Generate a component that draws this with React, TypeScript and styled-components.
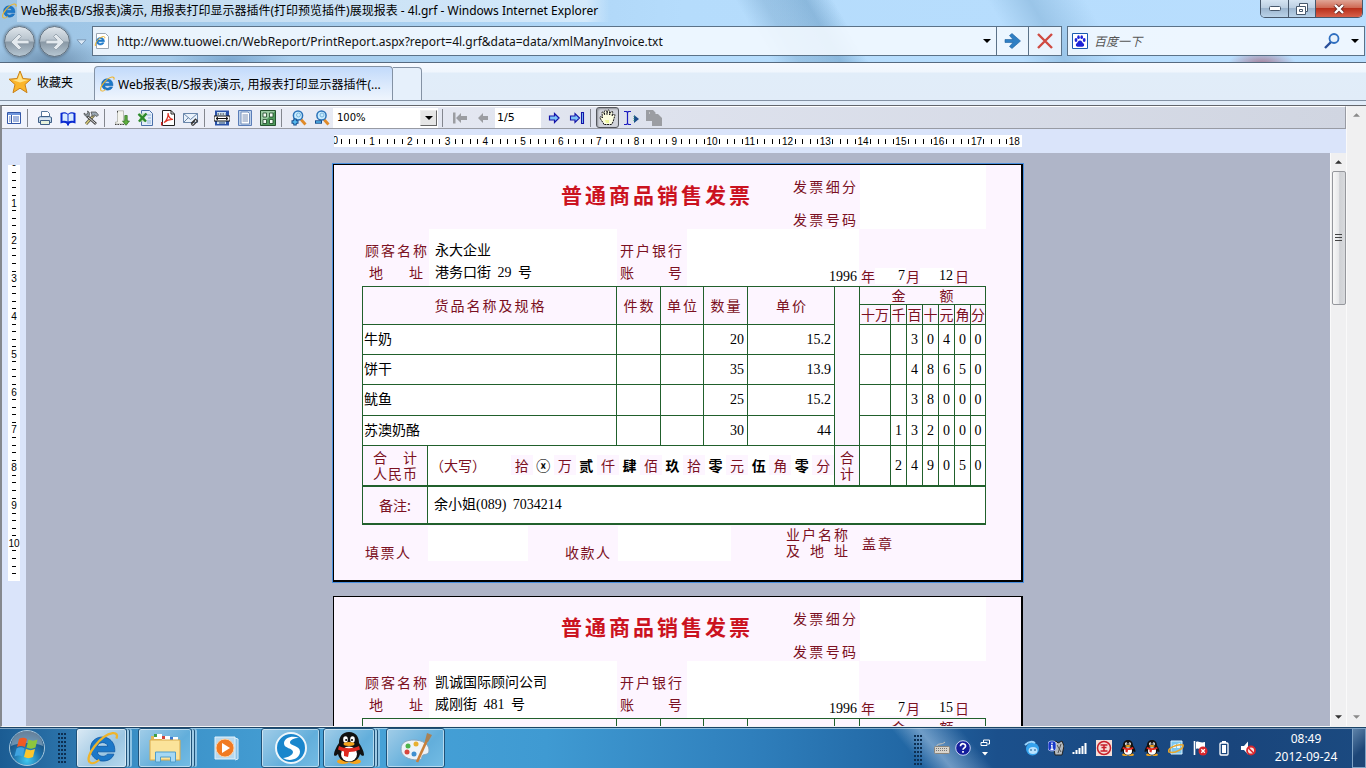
import React from 'react';
import styled, { createGlobalStyle, css } from 'styled-components';

const UI = `"Noto Sans", "Noto Sans CJK SC", sans-serif`;
const FORM = `"Liberation Serif", "Noto Sans CJK SC", serif`;
const KAI = `"Noto Sans CJK SC", sans-serif`;
const MAROON = '#7b1022';
const GREEN = '#21602c';
const PINK = '#fdf5ff';

const GlobalStyle = createGlobalStyle`
  * { box-sizing: border-box; }
  body { margin: 0; font-family: ${UI}; font-size: 12px; color: #000; }
  button { font: inherit; padding: 0; border: 0; background: none; color: inherit; }
  svg { display: block; flex: none; }
`;

/* ---------- window frame ---------- */

const Window = styled.div`
  height: 100vh;
  display: flex;
  flex-direction: column;
  overflow: hidden;
  background: #e2edf9;
`;

const Glass = styled.header`
  flex: none;
  border-bottom: 1px solid #566a80;
  background:
    radial-gradient(60px 24px at 50px 62px, rgba(70, 100, 130, 0.55), transparent),
    radial-gradient(60px 20px at 230px 60px, rgba(70, 120, 170, 0.4), transparent),
    radial-gradient(34px 14px at 1262px 64px, rgba(150, 60, 80, 0.6), transparent),
    linear-gradient(60deg, transparent 55%, rgba(90, 140, 180, 0.3) 57%, transparent 62%),
    linear-gradient(240deg, transparent 20%, rgba(110, 160, 200, 0.4) 24%, transparent 27%, transparent 38%, rgba(110, 160, 200, 0.5) 40%, transparent 43%),
    linear-gradient(90deg, #9dc4e4 0, #a9d0f0 30%, #b5dcfc 50%, #b9defe 100%);
`;

const TitleBar = styled.div`
  display: flex;
  align-items: flex-start;
  height: 26px;
  padding: 0 3px 0 1px;
`;

const TitleText = styled.h1`
  margin: 0;
  padding: 0 12px 0 4px;
  font-size: 12px;
  line-height: 22px;
  font-weight: 400;
  white-space: nowrap;
  background: linear-gradient(90deg, rgba(255, 255, 255, 0.35), rgba(255, 255, 255, 0.45) 96%, transparent);
`;

const TitleIcon = styled.span`
  padding-top: 3px;
`;

const WindowButtons = styled.div`
  display: flex;
  margin-left: auto;
  height: 18px;
  border: 1px solid #47586c;
  border-top: 0;
  border-radius: 0 0 5px 5px;
  overflow: hidden;
`;

const WindowButton = styled.button<{ $close?: boolean }>`
  width: ${p => (p.$close ? 47 : 27)}px;
  display: flex;
  align-items: center;
  justify-content: center;
  border-left: ${p => (p.$close ? 1 : 0)}px solid #47586c;
  background: ${p =>
    p.$close
      ? 'linear-gradient(#e0a596, #cf6a55 45%, #b9301b 50%, #d8614a)'
      : 'linear-gradient(#d5e4f2, #bccfe2 45%, #9db6cf 50%, #b9d2e8)'};
  & + & { border-left: 1px solid #47586c; }
`;

const NavRow = styled.div`
  display: flex;
  height: 36px;
  padding-left: 4px;
`;

const RoundButton = styled.button`
  width: 31px;
  height: 31px;
  margin-right: 4px;
  border-radius: 50%;
  border: 1px solid #64727f;
  display: flex;
  align-items: center;
  justify-content: center;
  background: linear-gradient(#dfe6ec, #b4c0ca 48%, #8998a5 52%, #b6c6d2);
  box-shadow: 0 0 3px #4c5c6c;
`;

const HistoryButton = styled.button`
  width: 14px;
  height: 32px;
  display: flex;
  align-items: center;
  justify-content: center;
`;

const Field = styled.div`
  display: flex;
  align-items: center;
  height: 30px;
  border: 1px solid #5b7288;
  background: rgba(244, 249, 255, 0.88);
`;

const AddressField = styled(Field)`
  flex: 1;
  margin-left: 4px;
`;

const SearchField = styled(Field)`
  width: 298px;
  margin: 0 1px 0 5px;
  padding: 0 0 0 4px;
`;

const FieldInput = styled.input`
  flex: 1;
  min-width: 0;
  border: 0;
  outline: 0;
  background: transparent;
  padding: 0 0 0 6px;
  font-family: ${UI};
  font-size: 12px;
  color: #111;
  &::placeholder { color: #555; opacity: 1; font-style: italic; }
`;

const FieldButton = styled.button<{ $w: number; $line?: boolean }>`
  width: ${p => p.$w}px;
  height: 28px;
  display: flex;
  align-items: center;
  justify-content: center;
  border-left: ${p => (p.$line ? 1 : 0)}px solid #5b7288;
`;

const TabRow = styled.div`
  flex: none;
  display: flex;
  align-items: flex-end;
  height: 38px;
  border-bottom: 1px solid #8492a4;
  background: linear-gradient(#f5f9ff, #f0f6fd 9px, #e1edf9 10px, #e1ecf8);
`;

const Favorites = styled.button`
  display: flex;
  align-items: center;
  align-self: stretch;
  gap: 5px;
  width: 94px;
  padding-left: 8px;
`;

const Tab = styled.div`
  display: flex;
  align-items: center;
  gap: 3px;
  width: 299px;
  height: 34px;
  padding: 0 4px;
  border: 1px solid #8492a4;
  border-bottom: 0;
  border-radius: 4px 4px 0 0;
  background: linear-gradient(#c2dafb, #d9e8fc 50%, #eff5fd);
  white-space: nowrap;
`;

const TabTitle = styled.span`
  overflow: hidden;
`;

const NewTab = styled.button`
  width: 29px;
  height: 33px;
  border: 1px solid #8492a4;
  border-left: 0;
  border-bottom: 0;
  border-radius: 0 4px 0 0;
  background: #e6f0fb;
`;

/* ---------- report viewer ---------- */

const Client = styled.main`
  flex: 1;
  min-height: 0;
  display: flex;
  margin-top: 4px;
  border-top: 1px solid #63666c;
  border-left: 2px solid #85888e;
  border-bottom: 1px solid #f4f4f4;
`;

const Viewer = styled.section`
  flex: 1;
  min-width: 0;
  display: flex;
  flex-direction: column;
  background: #dae4fa;
`;

const Toolbar = styled.div`
  flex: none;
  display: flex;
  align-items: center;
  height: 23px;
  border-top: 1px solid #fff;
  border-bottom: 1px solid #989ba4;
  border-right: 1px solid #989ba4;
  background: linear-gradient(90deg, #f2f4fc, #dfe3ee 45%, #d0d5e1);
`;

const ToolButton = styled.button<{ $pressed?: boolean }>`
  width: 23px;
  height: 21px;
  display: flex;
  align-items: center;
  justify-content: center;
  ${p => p.$pressed && css`
    border: 1px solid #55585e;
    border-radius: 3px;
    background: #d2d5dc;
    box-shadow: inset 1px 1px 2px #8c8f96;
  `}
`;

const Separator = styled.i`
  width: 1px;
  height: 18px;
  margin: 0 5px 0 2px;
  background: #84878f;
`;

const ZoomBox = styled.div`
  display: grid;
  grid-template-columns: 1fr 19px;
  width: 105px;
  height: 20px;
  margin-right: 2px;
  background: #fff;
`;

const ZoomSelect = styled.select`
  grid-area: 1 / 1 / 2 / 3;
  appearance: none;
  border: 0;
  outline: 0;
  background: #fff;
  padding: 0 20px 0 4px;
  font-family: "DejaVu Sans", sans-serif;
  font-size: 10px;
  color: #000;
`;

const ZoomArrow = styled.span`
  grid-area: 1 / 2 / 2 / 3;
  z-index: 1;
  pointer-events: none;
  display: flex;
  align-items: center;
  justify-content: center;
  margin: 2px 1px;
  border: 1px solid;
  border-color: #eee #666 #666 #eee;
  background: #e6e6e6;
`;

const PageInput = styled.input`
  width: 46px;
  height: 20px;
  margin: 0 1px;
  border: 0;
  outline: 0;
  padding: 0 2px;
  font-family: "DejaVu Sans", sans-serif;
  font-size: 11px;
`;

const RulerBand = styled.div`
  flex: none;
  height: 24px;
  display: flex;
  align-items: center;
  justify-content: center;
  padding: 0 16px 0 24px;
`;

const HRuler = styled.div`
  display: flex;
  width: 688px;
  height: 12px;
  overflow: hidden;
  background: #fff;
  font: 10px/12px "Liberation Sans", sans-serif;
`;

const VRuler = styled(HRuler)`
  flex-direction: column;
  width: 12px;
  height: 416px;
  margin: 12px 0 0 6px;
`;

const RulerStart = styled.span`
  flex: none;
  width: 4px;
  height: 12px;
  display: flex;
  justify-content: flex-end;
  overflow: hidden;
`;

const RulerTop = styled(RulerStart)`
  width: 12px;
  height: 4px;
  justify-content: center;
  align-items: flex-end;
`;

const Ticks = styled.div<{ $vertical?: boolean }>`
  flex: none;
  display: grid;
  ${p => p.$vertical
    ? css`height: 416px; grid-auto-rows: 1fr;`
    : css`width: 680px; grid-auto-flow: column; grid-auto-columns: 1fr;`}
`;

const Slot = styled.span`
  display: flex;
  align-items: center;
  justify-content: center;
  min-width: 0;
  min-height: 0;
  white-space: nowrap;
  line-height: 1px;
`;

const Tick = styled.i<{ $vertical?: boolean }>`
  width: ${p => (p.$vertical ? 4 : 1)}px;
  height: ${p => (p.$vertical ? 1 : 5)}px;
  background: #000;
`;

const Body = styled.div`
  flex: 1;
  min-height: 0;
  display: flex;
`;

const RulerColumn = styled.div`
  flex: none;
  width: 24px;
`;

const Canvas = styled.div`
  flex: 1;
  min-width: 0;
  overflow: hidden;
  display: flex;
  flex-direction: column;
  align-items: center;
  gap: 14px;
  padding-top: 11px;
  background: #afb5c8;
`;

const Scrollbar = styled.div<{ $w: number }>`
  flex: none;
  width: ${p => p.$w}px;
  display: flex;
  flex-direction: column;
  align-items: center;
  background: #f0f0f1;
  border-left: 1px solid #fafafa;
`;

const ScrollButton = styled.button<{ $end?: boolean }>`
  width: 100%;
  height: 18px;
  display: flex;
  align-items: center;
  justify-content: center;
  margin-top: ${p => (p.$end ? 'auto' : 0)};
`;

const Thumb = styled.div`
  width: 14px;
  height: 134px;
  border: 1px solid #95979c;
  border-radius: 2px;
  background: linear-gradient(90deg, #f8f8f8, #e6e7e9 50%, #cfd1d5 55%, #d8dadd);
  display: flex;
  align-items: center;
  justify-content: center;
`;

/* ---------- invoice form ---------- */

const Sheet = styled.article<{ $active?: boolean }>`
  flex: none;
  width: 690px;
  height: 418px;
  padding: 0 35px 0 28px;
  border: solid #000;
  border-width: 1px 2px 2px 1px;
  background: ${PINK};
  outline: ${p => (p.$active ? '1px solid #4a90e0' : 'none')};
  font-family: ${FORM};
  font-size: 14px;
`;

const HeadTop = styled.div`
  display: flex;
  height: 64px;
`;

const Title = styled.h2`
  width: 189px;
  margin: 14px 0 0 199px;
  font-family: ${KAI};
  font-size: 21px;
  line-height: 30px;
  font-weight: 700;
  color: #cb1220;
  text-align-last: justify;
`;

const Label = styled.span<{ $w: number; $ml?: number }>`
  display: block;
  flex: none;
  width: ${p => p.$w}px;
  margin-left: ${p => p.$ml ?? 0}px;
  font-family: ${KAI};
  font-size: 14px;
  line-height: 16px;
  color: ${MAROON};
  text-align-last: justify;
  white-space: nowrap;
`;

const NumberLabels = styled.div`
  display: flex;
  flex-direction: column;
  gap: 17px;
  padding-top: 13px;
  margin-left: 43px;
`;

const Blank = styled.div<{ $w: number; $ml: number; $h?: number }>`
  flex: none;
  width: ${p => p.$w}px;
  margin-left: ${p => p.$ml}px;
  ${p => p.$h && `height: ${p.$h}px;`}
  background: #fff;
`;

const HeadInfo = styled.div`
  display: flex;
  height: 57px;
`;

const LabelPair = styled.div<{ $ml: number }>`
  display: flex;
  flex-direction: column;
  align-items: center;
  gap: 6px;
  width: 62px;
  padding-top: 13px;
  margin-left: ${p => p.$ml}px;
`;

const Values = styled(Blank)`
  padding: 11px 0 0 6px;
  line-height: 22px;
  white-space: nowrap;
`;

const Num = styled.span`
  margin: 0 3px;
`;

const YearBlank = styled(Blank)`
  display: flex;
  align-items: flex-end;
  justify-content: flex-end;
  padding: 0 2px 1px 0;
  line-height: 17px;
`;

const DateParts = styled.div`
  display: flex;
  align-items: flex-end;
  padding: 0 0 2px 2px;
  line-height: 16px;
`;

const DateBlank = styled.span<{ $w: number }>`
  width: ${p => p.$w}px;
  padding-right: 1px;
  text-align: right;
  background: #fff;
`;

const Grid = styled.table`
  width: 624px;
  table-layout: fixed;
  border-collapse: separate;
  border-spacing: 0;
  border: solid ${GREEN};
  border-width: 1px 0 0 1px;
  line-height: 16px;
`;

const Row = styled.tr<{ $h: number }>`
  height: ${p => p.$h}px;
`;

const cell = css`
  padding: 0;
  border: solid ${GREEN};
  border-width: 0 1px 1px 0;
  white-space: nowrap;
`;

const HeadCell = styled.th<{ $thick?: boolean }>`
  ${cell}
  font-family: ${KAI};
  font-size: 14px;
  font-weight: 400;
  color: ${MAROON};
  text-align: center;
  padding-bottom: 1px;
  ${p => p.$thick && 'border-bottom-width: 2px;'}
`;

const Cell = styled.td<{ $align?: string; $thick?: boolean; $pad?: string }>`
  ${cell}
  background: #fff;
  text-align: ${p => p.$align ?? 'left'};
  padding: ${p => p.$pad ?? '0'};
  ${p => p.$thick && 'border-bottom-width: 2px;'}
`;

const Centered = styled.div`
  display: flex;
  justify-content: center;
`;

const Stack = styled.div`
  display: flex;
  flex-direction: column;
  align-items: center;
`;

const Words = styled.div`
  display: flex;
  align-items: center;
  padding-bottom: 2px;
`;

const WordSlots = styled.div`
  flex: 1;
  display: grid;
  grid-template-columns: repeat(15, 1fr);
  margin-left: 25px;
`;

const Unit = styled.span`
  font-family: ${KAI};
  color: ${MAROON};
  text-align: center;
  line-height: 20px;
  background: ${PINK};
`;

const Digit = styled.b`
  font-family: ${KAI};
  font-weight: 700;
  text-align: center;
  line-height: 20px;
`;

const Footer = styled.div`
  display: flex;
  align-items: flex-start;
  padding-top: 1px;
`;

const Raise = styled.div<{ $top: number }>`
  padding-top: ${p => p.$top}px;
`;

/* ---------- taskbar ---------- */

const Taskbar = styled.footer`
  flex: none;
  display: flex;
  height: 41px;
  padding-left: 8px;
  border-top: 1px solid #1c4468;
  box-shadow: inset 0 1px 0 rgba(255, 255, 255, 0.45);
  color: #fff;
  background:
    linear-gradient(50deg, transparent 66%, rgba(190, 215, 240, 0.5) 68%, transparent 71%),
    linear-gradient(90deg, #1b5c93 0, #2c74ab 5%, #3a8fc6 10%, #48a3d8 25%, #3f9ad2 40%, #2f7fbc 55%, #2268a5 66%, #1b508c 73%, #19457c 90%, #1b4a80);
`;

const Orb = styled.button`
  width: 38px;
  display: flex;
  align-items: center;
  justify-content: center;
`;

const Grip = styled.i`
  width: 9px;
  height: 31px;
  margin: 5px 9px 0 12px;
  background-image: radial-gradient(circle at 1px 1px, #0d2f52 1px, transparent 1px);
  background-size: 3px 4px;
`;

const TaskButton = styled.button<{ $w: number; $kind?: 'active' | 'plain'; $stack?: boolean }>`
  width: ${p => p.$w}px;
  height: 40px;
  margin-right: ${p => (p.$stack ? 11 : 3)}px;
  display: flex;
  align-items: center;
  justify-content: center;
  ${p => p.$kind !== 'plain' && css`
    border: 1px solid #1f5279;
    border-radius: 3px;
    background: ${p.$kind === 'active'
      ? 'linear-gradient(135deg, #dbeaf5, #9cc6e2 60%, #b6d9ee)'
      : 'linear-gradient(135deg, #a2cde8, #62aedb 60%, #74bce4)'};
    box-shadow: inset 0 0 0 1px rgba(255, 255, 255, 0.5)
      ${p.$stack ? ', 3px 0 0 -1px #9fcbe6, 4px 0 0 -1px #1f5279, 6px 0 0 -1px #8cc2e4' : ''};
  `}
`;

const Tray = styled.div`
  display: flex;
  align-items: center;
  margin-left: auto;
`;

const TrayButton = styled.button<{ $w?: number }>`
  width: ${p => p.$w ?? 24}px;
  height: 40px;
  display: flex;
  align-items: center;
  justify-content: center;
`;

const Clock = styled.time`
  width: 92px;
  font-size: 12px;
  line-height: 18px;
  text-align: center;
`;

const ShowDesktop = styled.button`
  width: 14px;
  height: 40px;
  border: 1px solid #7fa3c6;
  background: linear-gradient(135deg, #5d82a8, #1d4677 60%);
`;

/* ---------- drawings ---------- */

const Svg = ({ s = 16, w, h, vb, children }: { s?: number; w?: number; h?: number; vb?: string; children: React.ReactNode }) => (
  <svg width={w ?? s} height={h ?? s} viewBox={vb ?? `0 0 ${w ?? s} ${h ?? s}`} fill="none" aria-hidden="true">{children}</svg>
);

const IeIcon = ({ s = 16 }: { s?: number }) => (
  <Svg s={s} vb="0 0 16 16">
    <path d="M14 9.800H5.800c.2 2.400 3.800 2.800 4.700 1.100h3.100c-1.600 4.900-11 4.400-11-2.600 0-7.500 12-7.500 11.400 1.500zM5.800 7.200h4.900c-.2-2.300-4.500-2.300-4.900 0z" fill="#1c78c8" stroke="#0e5aa6" strokeWidth=".4" />
    <path d="M2.300 14.800C-.6 12 7.600 1.800 13 1c2-.2 2.400 1 1.800 2.600" stroke="#efb42a" strokeWidth="1.100" />
    <path d="M2.300 14.800c1 .7 2.900 0 4.400-1.300" stroke="#efb42a" strokeWidth="1" />
  </Svg>
);

const Down = ({ c = '#000', w = 8 }: { c?: string; w?: number }) => (
  <Svg w={w} h={4} vb="0 0 8 4"><path d="M0 0h8L4 4z" fill={c} /></Svg>
);
const Up = ({ c = '#333' }: { c?: string }) => (
  <Svg w={7} h={4} vb="0 0 8 4"><path d="M0 4h8L4 0z" fill={c} /></Svg>
);

const NavArrow = ({ flip }: { flip?: boolean }) => (
  <Svg s={22}>
    <path transform={flip ? 'translate(22 0) scale(-1 1)' : undefined}
      d="M2 11l8-8 2.500 2.500L8.800 9.200H20v3.600H8.800l3.700 3.700L10 19z" fill="#e3e9ee" stroke="#8e9ba6" strokeWidth=".8" />
  </Svg>
);

const PageIe = () => (
  <Svg s={16}>
    <path d="M2.500 .5h9l3 3v12h-12z" fill="#fff" stroke="#9aa6b2" />
    <path d="M10.500 8.800H4.200c.3 2 3 2.300 3.800 1H10c-1.200 3.300-7.600 3-7.600-1.500 0-5 8.300-5.500 8.100.5zM4.300 7h3.900c-.3-1.800-3.400-1.800-3.900 0z" fill="#1c78c8" stroke="#1c78c8" strokeWidth=".5" />
    <path d="M1.500 13C0 11 5 4 9.500 3.500c1.300 0 1.500.8 1.200 1.800" stroke="#efb42a" />
  </Svg>
);

const Star = () => (
  <Svg s={24}>
    <path d="M12 1l3 7.500 8 .7-6 5.300 2 8.200-7-4.500-7 4.500 2-8.200-6-5.300 8-.7z" fill="#fbb62b" stroke="#c9821a" strokeLinejoin="round" />
    <path d="M12 3l2.300 6.300 5.700.6-8 2.600-7.500-2.600 5.200-.6z" fill="#ffe288" />
  </Svg>
);

const Paw = () => (
  <Svg s={16}>
    <path d="M.5.5h15v15H.5z" fill="#fff" stroke="#1a5ab0" />
    <g fill="#1d22d8">
      <ellipse cx="4" cy="7" rx="1.400" ry="1.900" /><ellipse cx="6.500" cy="4.200" rx="1.300" ry="1.900" />
      <ellipse cx="9.700" cy="4.200" rx="1.300" ry="1.900" /><ellipse cx="12.200" cy="7" rx="1.400" ry="1.900" />
      <path d="M8 7.500c2 0 2 1.800 3.300 2.800 1.500 1.200.9 3.400-.9 3.400H5.600c-1.800 0-2.400-2.200-.9-3.400C6 9.300 6 7.500 8 7.500z" />
    </g>
  </Svg>
);

const tools = {
  panel: <Svg><path d="M1.500 2.500h13v11h-13z" fill="#fff" stroke="#3558a8" /><path d="M2 3h12v2H2z" fill="#6f95dc" /><path d="M5.500 5v8" stroke="#3558a8" /><path d="M3 7h1.500M3 9h1.500M3 11h1.500M7 7h6M7 9h6M7 11h6" stroke="#4a6fc0" /></Svg>,
  print: <Svg><path d="M4.500 7V1.500h6l2 2V7" fill="#fff" stroke="#57789c" /><path d="M1.500 7.500l2-1h9l2 1v5h-13z" fill="#b9cfe4" stroke="#3f5f86" /><path d="M3.500 10.500h9v4h-9z" fill="#e8f2dc" stroke="#3f5f86" /><path d="M2.500 9h11" stroke="#fff" /></Svg>,
  book: <Svg><path d="M.5 3c3-1.500 6-1 7.500 1 1.500-2 4.500-2.500 7.500-1v10.500c-2.500-1-5-.8-6.500.5v1.500H7V14c-1.500-1.300-4-1.500-6.500-.5z" fill="#0a2ad0" /><path d="M2.500 4c2-.8 3.700-.5 5 .6v7c-1.300-.8-3-1-5-.5zM13.500 4c-2-.8-3.700-.5-5 .6v7c1.300-.8 3-1 5-.5z" fill="#d7eaff" /></Svg>,
  tools: <Svg><path d="M3 14l8-9" stroke="#5b5b4a" strokeWidth="3" /><path d="M3 14l8-9" stroke="#e0cf7a" strokeWidth="1.300" /><path d="M4 6l9 8" stroke="#444" strokeWidth="2.800" /><path d="M4.500 6.500l8 7" stroke="#e6e6e6" /><path d="M1 3l2 1.500L5 3l-.5-2C7 2 7 5 5.500 6.500 3 7 1 5.500 1 3z" fill="#8a949c" stroke="#444" strokeWidth=".7" /><path d="M8 2l5 0 2.500 3-1.500 1.500L11.500 5 9.500 6.500z" fill="#9aa8b4" stroke="#444" strokeWidth=".7" /></Svg>,
  exportDoc: <Svg><path d="M3.500 .8h6V10h4v4h-12V12h2z" fill="#f4f4ee" stroke="#aeb0a8" strokeWidth=".8" /><path d="M1 14.500h9M3.500 1v2" stroke="#444" strokeDasharray="1.500 1" /><path d="M10.800 5.500h2.400V11h2.300L12 15.300 8.500 11h2.300z" fill="#5fae3e" stroke="#2d6e1e" strokeWidth=".7" /></Svg>,
  excel: <Svg><path d="M4.500 .5h8l3 3v12h-11z" fill="#e4eefb" stroke="#4a6fa8" /><path d="M10 5h4M11 8h3M10 11h4M10 13h4" stroke="#8fb4dc" /><path d="M1 3.500h8.500l-2 4 2 4H1l2-4z" fill="#b8dcb0" /><path d="M1.500 4L9 11.500M9.500 3.500l-7.500 8" stroke="#2c8a2c" strokeWidth="2.400" /></Svg>,
  pdf: <Svg><path d="M2.500 .5h8.500l3.500 3.500v11.500h-12z" fill="#fff" stroke="#222" /><path d="M11 .5V4h3.500" stroke="#222" /><path d="M4 12.500c2.500-1.500 4.500-6 4-9.500.3 4 2 6 5 6.500-3-.2-6 .6-9 3z" stroke="#e03020" strokeWidth="1.200" /><path d="M1 12h1.500v3.500H1z" fill="#c22" /></Svg>,
  mail: <Svg><path d="M.5 3.500h14v9H.5z" fill="#eaf2fb" stroke="#6b87ab" /><path d="M.5 3.500L7.500 9.500l7-6M.5 12.500l5-5" stroke="#6b87ab" /><path d="M8 13.500l4.500-4.500 2 2-4 4c-1 .8-2.500-.5-1.500-1.500L12 10.500" stroke="#333" strokeWidth="1.100" /></Svg>,
  width: <Svg><path d="M1 .5h14v15H1z" fill="#2a52a8" /><path d="M3 2h9v12H3z" fill="#cfe4f5" /><path d="M3.500 4h8" stroke="#333" strokeDasharray="1.500 1" /><path d="M0 6h16v5H0z" fill="#fff" stroke="#111" /><path d="M2 8.500h12M4 7L2 8.500 4 10M12 7l2 1.500L12 10" stroke="#111" /><path d="M5 13h6" stroke="#26406e" /></Svg>,
  page: <Svg><path d="M1.500 .5h13v15h-13z" fill="#bcd0ea" stroke="#5a7db8" /><path d="M4 2h7l1.500 1.500V14H4z" fill="#fff" stroke="#7590bd" /><path d="M5.500 5h5.500M5.500 7h5.500M5.500 9h5.500M5.500 11h5.500" stroke="#7b8fb4" /></Svg>,
  multi: <Svg><path d="M.5.5h15v15H.5z" fill="#4f9a5c" stroke="#24532e" /><path d="M1 1h14L1 15z" fill="#9ccba4" /><path d="M3 3h3.500v4H3zM9.500 3H13v4H9.500zM3 9.500h3.500v4H3zM9.500 9.500H13v4H9.500z" fill="#f4fbf4" stroke="#1d4526" strokeWidth=".8" /></Svg>,
  zoomIn: <Svg><path d="M10 9.500l4.500 5" stroke="#e08a28" strokeWidth="2.800" /><circle cx="7" cy="5.500" r="4.600" fill="#c8ecff" stroke="#2a72b8" strokeWidth="1.500" /><circle cx="7.500" cy="5" r="2" stroke="#7ab6dc" /><path d="M4 8.500v7M.5 12h7" stroke="#124a8c" strokeWidth="3.400" /><path d="M4 9.500v5M1.500 12h5" stroke="#5ac0f4" strokeWidth="1.500" /></Svg>,
  zoomOut: <Svg><path d="M10 9.500l4.500 5" stroke="#e08a28" strokeWidth="2.800" /><circle cx="7.500" cy="5.500" r="4.600" fill="#c8ecff" stroke="#2a72b8" strokeWidth="1.500" /><circle cx="8" cy="5" r="2" stroke="#7ab6dc" /><path d="M1 12h7" stroke="#124a8c" strokeWidth="3.400" /><path d="M2 12h5" stroke="#5ac0f4" strokeWidth="1.400" /></Svg>,
  first: <Svg><path d="M1 2.500h2.500v11H1zM4 8l5-5v3h6v4H9v3z" fill="#9b9da2" /></Svg>,
  prev: <Svg><path d="M3 8l5-5v3h5v4H8v3z" fill="#9b9da2" /></Svg>,
  next: <Svg><path d="M13 8L8.500 3.500V6h-5v4h5v2.500z" fill="#7fc4f8" stroke="#1414a8" strokeWidth="1.200" /></Svg>,
  last: <Svg><path d="M10.500 8L6 3.500V6H1.500v4H6v2.500zM12.500 2.500h2v11h-2z" fill="#7fc4f8" stroke="#1414a8" strokeWidth="1.100" /></Svg>,
  hand: <Svg s={17}><path d="M5 15.500C4 13 1 10 1 8.500c0-1.200 1.500-1 2.500.5L3 4c0-1.500 1.500-1.500 2 0l.6 2L5.500 2.500c0-1.500 2-1.500 2.200 0L8 5.500 8.500 2c.2-1.400 2-1.200 2 .2L10.500 6l1.400-3c.6-1.300 2-.8 1.800.5L13 7l1.300-1.500c1-.8 2 0 1.500 1.200C15 9 14.500 13 12.500 15.500z" fill="#fbfde0" stroke="#151515" strokeDasharray="2 .7" /><path d="M6 11h4v3H7z" fill="#eef79a" /></Svg>,
  text: <Svg><path d="M1 1.500h2.500l1 1 1-1H8M4.500 2.500v11M1 14.500h2.500l1-1 1 1H8" stroke="#1c1cc0" strokeWidth="1.200" /><path d="M11 5l5 4-5 4z" fill="#1a4a8a" /><path d="M11 6v6" stroke="#39a07a" strokeDasharray="1 1" /></Svg>,
  copy: <Svg><path d="M0 0h7l2.500 2.500V4H12l4 4v8H6v-5H0z" fill="#9b9da2" /><path d="M3 3h1" stroke="#eee" /></Svg>,
};

const Penguin = ({ s = 16 }: { s?: number }) => (
  <Svg s={s} vb="0 0 32 32">
    <ellipse cx="10" cy="29.500" rx="6" ry="2.500" fill="#f5a41c" /><ellipse cx="22" cy="29.500" rx="6" ry="2.500" fill="#f5a41c" />
    <path d="M16 0c7 0 10 5 10 11 2 3 5 8 5 12-1 2-3 0-4-1-1 5-5 8-11 8S6 27 5 22c-1 1-3 3-4 1 0-4 3-9 5-12C6 5 9 0 16 0z" fill="#111" />
    <ellipse cx="16" cy="22" rx="8" ry="7.500" fill="#fff" />
    <ellipse cx="12.500" cy="7.500" rx="2.300" ry="3.200" fill="#fff" /><ellipse cx="19.500" cy="7.500" rx="2.300" ry="3.200" fill="#fff" />
    <circle cx="13.200" cy="8" r="1.100" fill="#111" /><circle cx="19" cy="8" r="1.100" fill="#111" />
    <ellipse cx="16" cy="12" rx="5.500" ry="1.900" fill="#f5a41c" />
    <path d="M6 14c6 3 14 3 20 0l1 3.500c-4 1.700-7 2.500-11 2.500l-1 5-4-1v-4.500c-2-.5-4-1-6-2z" fill="#e02a20" />
  </Svg>
);

const trayIcons: [string, React.ReactNode][] = [
  ['聊天', <Svg key="a"><circle cx="8.500" cy="9" r="6.500" fill="#35a3ee" /><path d="M1 5c3-3 7-4 10-2" stroke="#9ad4fb" strokeWidth="2" /><ellipse cx="9" cy="10.500" rx="4.500" ry="3.500" fill="#b9e2fd" /><path d="M7 9v2M11 9v2" stroke="#14568e" /></Svg>],
  ['电话', <Svg key="b"><path d="M5 3l3-2 2 2 4-2 2 5-2 9H7z" fill="#b4b9be" stroke="#222" /><path d="M9 5l4 7M13 4l-3 9" stroke="#555" /><rect y="1" width="8" height="10" rx="3" fill="#1838c8" stroke="#dfe6ff" strokeWidth=".6" /><path d="M4 2.500v1.500M3 5.500h1v4M2.500 9.500h3" stroke="#fff" strokeWidth="1.300" /></Svg>],
  ['网络', <Svg key="c"><path d="M1.500 14v-2M4.500 14v-4M7.500 14V8" stroke="#fff" strokeWidth="2" /><path d="M10.500 14V6M13.500 14V3" stroke="#fff" strokeWidth="2" /></Svg>],
  ['工行', <Svg key="d"><path d="M0 0h16v16H0z" fill="#f4dfd8" /><circle cx="8" cy="8" r="6.500" stroke="#c81e28" strokeWidth="1.500" /><path d="M4.500 5h7M4.500 11h7M8 5v6M5.500 7.500h5" stroke="#c81e28" strokeWidth="1.500" /></Svg>],
  ['QQ', <Penguin key="e" />],
  ['QQ', <Penguin key="f" />],
  ['更新', <Svg key="g"><path d="M3 1h11v13H3z" fill="#7cc6ee" stroke="#d8f0ff" /><path d="M5 5l3-1v4H5zM9 4l3-1v5H9z" fill="#e9f7ff" /><path d="M1 12C-1 8 9 4 15 5c1 3-7 9-14 7z" stroke="#e8a62c" strokeWidth="1.600" /></Svg>],
  ['操作中心', <Svg key="h"><path d="M2.500 1v14" stroke="#fff" strokeWidth="1.600" /><path d="M4 2c3-1.500 4 1.500 9 0v7c-4 1.500-6-1.500-9 0z" fill="#fff" /><circle cx="11" cy="11" r="4.500" fill="#d8262c" /><path d="M9.300 9.300l3.500 3.500M12.800 9.300l-3.500 3.500" stroke="#fff" strokeWidth="1.300" /></Svg>],
  ['电池', <Svg key="i"><path d="M6 1h4v2H6z" fill="#fff" /><rect x="4" y="3" width="8" height="12" rx="1" stroke="#fff" strokeWidth="1.300" /><path d="M6 5h4v8H6z" fill="#fff" /></Svg>],
  ['音量', <Svg key="j"><path d="M1 6h3l4-4.500v13L4 10H1z" fill="#fff" /><circle cx="11" cy="10.500" r="4" stroke="#d8262c" strokeWidth="1.800" fill="#fbe3e1" /><path d="M8.500 8l5 5" stroke="#d8262c" strokeWidth="1.600" /></Svg>],
];

/* ---------- parts ---------- */

const Ruler = ({ cm, vertical, last }: { cm: number; vertical?: boolean; last: number }) => (
  <Ticks $vertical={vertical}>
    {Array.from({ length: cm * 5 }, (_, i) => {
      const n = (i + 1) / 5;
      return <Slot key={i}>{Number.isInteger(n) ? (n <= last ? n : null) : <Tick $vertical={vertical} />}</Slot>;
    })}
  </Ticks>
);

type Item = { name: string; qty: string; price: string; amount: string };
type Summary = { total: string; words: string[]; contact: string; phone: string };
type InvoiceData = {
  customer: string; street: string; no: string; month: string; day: string; items: Item[]; summary?: Summary;
};

const COLS = [65, 189, 44, 43, 44, 87, 25, 31, 16, 16, 16, 16, 16, 15];
const ROWS = [30, 30, 31, 30];
const UNITS = ['拾', '万', '仟', '佰', '拾', '元', '角', '分'];

const AmountCells = ({ value, thick }: { value: string; thick?: boolean }) => (
  <>{value.padStart(7).split('').map((d, i) => <Cell key={i} $align="center" $thick={thick}>{d.trim()}</Cell>)}</>
);

const SummaryRows = ({ total, words, contact, phone }: Summary) => (
  <>
    <Row $h={41}>
      <HeadCell $thick><Stack><Label $w={44}>合 计</Label><Label $w={44}>人民币</Label></Stack></HeadCell>
      <Cell colSpan={5} $thick>
        <Words>
          <Label $w={56} $ml={2}>（大写）</Label>
          <WordSlots>
            {UNITS.map((u, i) => (
              <React.Fragment key={i}>
                <Unit>{u}</Unit>
                {i < 7 && <Digit>{words[i]}</Digit>}
              </React.Fragment>
            ))}
          </WordSlots>
        </Words>
      </Cell>
      <HeadCell $thick><Stack><Label $w={14}>合</Label><Label $w={14}>计</Label></Stack></HeadCell>
      <AmountCells value={total} thick />
    </Row>
    <Row $h={38}>
      <HeadCell $thick>备注:</HeadCell>
      <Cell colSpan={13} $thick $pad="0 0 0 6px">{contact}(089) <Num>{phone}</Num></Cell>
    </Row>
  </>
);

const Invoice = ({ data, active }: { data: InvoiceData; active?: boolean }) => (
  <Sheet $active={active}>
    <HeadTop>
      <Title>普通商品销售发票</Title>
      <NumberLabels>
        <Label $w={63}>发票细分</Label>
        <Label $w={63}>发票号码</Label>
      </NumberLabels>
      <Blank $w={126} $ml={4} />
    </HeadTop>
    <HeadInfo>
      <LabelPair $ml={3}><Label $w={62}>顾客名称</Label><Label $w={54}>地 址</Label></LabelPair>
      <Values $w={188} $ml={2}>
        <div>{data.customer}</div>
        <div>{data.street} <Num>{data.no}</Num> 号</div>
      </Values>
      <LabelPair $ml={3}><Label $w={62}>开户银行</Label><Label $w={62}>账 号</Label></LabelPair>
      <YearBlank $w={172} $ml={5}>1996</YearBlank>
      <DateParts>
        <Label $w={14}>年</Label>
        <DateBlank $w={31}>{data.month}</DateBlank>
        <Label $w={14}>月</Label>
        <DateBlank $w={34}>{data.day}</DateBlank>
        <Label $w={14} $ml={1}>日</Label>
      </DateParts>
    </HeadInfo>
    <Grid>
      <colgroup>{COLS.map((w, i) => <col key={i} width={w} />)}</colgroup>
      <tbody>
        <Row $h={18}>
          <HeadCell colSpan={2} rowSpan={2}><Centered><Label $w={110}>货品名称及规格</Label></Centered></HeadCell>
          <HeadCell rowSpan={2}><Centered><Label $w={30}>件数</Label></Centered></HeadCell>
          <HeadCell rowSpan={2}><Centered><Label $w={30}>单位</Label></Centered></HeadCell>
          <HeadCell rowSpan={2}><Centered><Label $w={30}>数量</Label></Centered></HeadCell>
          <HeadCell rowSpan={2}><Centered><Label $w={30}>单价</Label></Centered></HeadCell>
          <HeadCell rowSpan={2 + data.items.length} />
          <HeadCell colSpan={7}><Centered><Label $w={62}>金 额</Label></Centered></HeadCell>
        </Row>
        <Row $h={20}>
          <HeadCell>十万</HeadCell>
          {['千', '百', '十', '元', '角', '分'].map((u, i) => <HeadCell key={i}>{u}</HeadCell>)}
        </Row>
        {data.items.map((it, i) => (
          <Row key={it.name} $h={ROWS[i]}>
            <Cell colSpan={2} $pad="0 0 0 1px">{it.name}</Cell>
            <Cell /><Cell />
            <Cell $align="right" $pad="0 3px 0 0">{it.qty}</Cell>
            <Cell $align="right" $pad="0 3px 0 0">{it.price}</Cell>
            <AmountCells value={it.amount} />
          </Row>
        ))}
        {data.summary && <SummaryRows {...data.summary} />}
      </tbody>
    </Grid>
    {data.summary && (
      <Footer>
        <Raise $top={18}><Label $w={45} $ml={3}>填票人</Label></Raise>
        <Blank $w={100} $ml={18} $h={35} />
        <Raise $top={18}><Label $w={45} $ml={37}>收款人</Label></Raise>
        <Blank $w={113} $ml={8} $h={35} />
        <div><Label $w={62} $ml={55}>业户名称</Label><Label $w={62} $ml={55}>及 地 址</Label></div>
        <Raise $top={9}><Label $w={30} $ml={14}>盖章</Label></Raise>
      </Footer>
    )}
  </Sheet>
);

const invoices: InvoiceData[] = [
  {
    customer: '永大企业', street: '港务口街', no: '29', month: '7', day: '12',
    items: [
      { name: '牛奶', qty: '20', price: '15.2', amount: '30400' },
      { name: '饼干', qty: '35', price: '13.9', amount: '48650' },
      { name: '鱿鱼', qty: '25', price: '15.2', amount: '38000' },
      { name: '苏澳奶酪', qty: '30', price: '44', amount: '132000' },
    ],
    summary: {
      total: '249050', words: ['ⓧ', '贰', '肆', '玖', '零', '伍', '零'],
      contact: '余小姐', phone: '7034214',
    },
  },
  { customer: '凯诚国际顾问公司', street: '威刚街', no: '481', month: '7', day: '15', items: [] },
];

const Tool = ({ name, label, pressed }: { name: keyof typeof tools; label: string; pressed?: boolean }) => (
  <ToolButton type="button" aria-label={label} $pressed={pressed}>{tools[name]}</ToolButton>
);

export default function App() {
  return (
    <Window>
      <GlobalStyle />
      <Glass>
        <TitleBar>
          <TitleIcon><IeIcon /></TitleIcon>
          <TitleText>Web报表(B/S报表)演示, 用报表打印显示器插件(打印预览插件)展现报表 - 4l.grf - Windows Internet Explorer</TitleText>
          <WindowButtons>
            <WindowButton type="button" aria-label="最小化"><Svg w={12} h={5}><rect x=".5" y=".5" width="11" height="4" rx="1" fill="#fff" stroke="#47586c" /></Svg></WindowButton>
            <WindowButton type="button" aria-label="还原"><Svg s={12}><path d="M3.500 .5h8v8h-2v3h-9v-8h3z" fill="#fff" stroke="#47586c" /><path d="M3.500 3.500h6v5M3.500 6.500h3v2h-3z" stroke="#47586c" /></Svg></WindowButton>
            <WindowButton type="button" aria-label="关闭" $close><Svg w={12} h={10}><path d="M2 1l8 8M10 1L2 9" stroke="#6b2a24" strokeWidth="4" /><path d="M2 1l8 8M10 1L2 9" stroke="#fff" strokeWidth="2.400" /></Svg></WindowButton>
          </WindowButtons>
        </TitleBar>
        <NavRow>
          <RoundButton type="button" aria-label="后退"><NavArrow /></RoundButton>
          <RoundButton type="button" aria-label="前进"><NavArrow flip /></RoundButton>
          <HistoryButton type="button" aria-label="历史"><Svg w={11} h={7}><path d="M1 .8h9L5.500 5.800z" fill="#dbe9f6" stroke="#7d9ab8" /></Svg></HistoryButton>
          <AddressField>
            <FieldButton as="span" $w={18}><PageIe /></FieldButton>
            <FieldInput aria-label="地址" defaultValue="http://www.tuowei.cn/WebReport/PrintReport.aspx?report=4l.grf&data=data/xmlManyInvoice.txt" />
            <FieldButton type="button" aria-label="地址列表" $w={18}><Down /></FieldButton>
            <FieldButton type="button" aria-label="转到" $w={32} $line><Svg s={18}><path d="M1 7.500h8L5.500 3.500 8 1.500 16.500 9 8 16.500l-2.500-2L9 10.500H1z" fill="#2f7fc4" stroke="#1d5f9e" strokeWidth=".6" /></Svg></FieldButton>
            <FieldButton type="button" aria-label="停止" $w={33} $line><Svg s={18}><path d="M2 2l14 14M16 2L2 16" stroke="#cf4a42" strokeWidth="2.400" /></Svg></FieldButton>
          </AddressField>
          <SearchField>
            <Paw />
            <FieldInput aria-label="搜索" placeholder="百度一下" />
            <FieldButton type="button" aria-label="搜索" $w={28}><Svg s={16}><path d="M1 15l6-6" stroke="#2a4f9a" strokeWidth="2.400" /><circle cx="10" cy="5.500" r="4.500" fill="#e8f2fc" stroke="#2f6fc0" strokeWidth="1.800" /></Svg></FieldButton>
            <FieldButton type="button" aria-label="搜索选项" $w={18}><Down /></FieldButton>
          </SearchField>
        </NavRow>
      </Glass>
      <TabRow>
        <Favorites type="button"><Star />收藏夹</Favorites>
        <Tab><IeIcon /><TabTitle>Web报表(B/S报表)演示, 用报表打印显示器插件(...</TabTitle></Tab>
        <NewTab type="button" aria-label="新选项卡" />
      </TabRow>
      <Client>
        <Viewer>
          <Toolbar>
            <Tool name="panel" label="目录" />
            <Separator />
            <Tool name="print" label="打印" /><Tool name="book" label="页面设置" /><Tool name="tools" label="设置" />
            <Separator />
            <Tool name="exportDoc" label="导出" /><Tool name="excel" label="导出 Excel" /><Tool name="pdf" label="导出 PDF" /><Tool name="mail" label="发送邮件" />
            <Separator />
            <Tool name="width" label="页宽" /><Tool name="page" label="整页" /><Tool name="multi" label="多页" />
            <Separator />
            <Tool name="zoomIn" label="放大" /><Tool name="zoomOut" label="缩小" />
            <ZoomBox>
              <ZoomSelect aria-label="缩放"><option>100%</option></ZoomSelect>
              <ZoomArrow><Down /></ZoomArrow>
            </ZoomBox>
            <Separator />
            <Tool name="first" label="首页" /><Tool name="prev" label="上一页" />
            <PageInput aria-label="页码" defaultValue="1/5" />
            <Tool name="next" label="下一页" /><Tool name="last" label="末页" />
            <Separator />
            <Tool name="hand" label="移动" pressed /><Tool name="text" label="选择文字" /><Tool name="copy" label="复制" />
          </Toolbar>
          <RulerBand>
            <HRuler>
              <RulerStart>0</RulerStart>
              <Ruler cm={18} last={18} />
            </HRuler>
          </RulerBand>
          <Body>
            <RulerColumn>
              <VRuler>
                <RulerTop>0</RulerTop>
                <Ruler cm={11} last={10} vertical />
              </VRuler>
            </RulerColumn>
            <Canvas>
              {invoices.map((d, i) => <Invoice key={d.customer} data={d} active={i === 0} />)}
            </Canvas>
            <Scrollbar $w={16}>
              <ScrollButton type="button" aria-label="向上"><Up /></ScrollButton>
              <Thumb><Svg w={7} h={8}><path d="M0 .5h7M0 3.500h7M0 6.500h7" stroke="#444" /></Svg></Thumb>
              <ScrollButton type="button" aria-label="向下" $end><Down c="#333" w={7} /></ScrollButton>
            </Scrollbar>
          </Body>
        </Viewer>
        <Scrollbar $w={20}>
          <ScrollButton type="button" aria-label="页面向上"><Up c="#8a8a8a" /></ScrollButton>
          <ScrollButton type="button" aria-label="页面向下" $end><Down c="#8a8a8a" w={7} /></ScrollButton>
        </Scrollbar>
      </Client>
      <Taskbar>
        <Orb type="button" aria-label="开始">
          <Svg s={38}>
            <defs>
              <radialGradient id="orb" cx=".5" cy=".85" r=".8"><stop offset="0" stopColor="#3fc8f0" /><stop offset=".5" stopColor="#1e6fa8" /><stop offset="1" stopColor="#173f66" /></radialGradient>
            </defs>
            <circle cx="19" cy="19" r="17.500" fill="url(#orb)" stroke="#a6c8de" />
            <path d="M3 17a16 15 0 0 1 32 0c-8-4-24-4-32 0z" fill="#fff" opacity=".35" />
            <path d="M11 10c3-2 6-1 8 0l-2 8c-3-1.500-5-1.500-8 0z" fill="#ee5a24" />
            <path d="M20.500 10.500c3 1.500 6 1.500 9 0l-2 8c-3 1.500-6 1.500-9 0z" fill="#8cc63e" />
            <path d="M8.500 19.500c3-2 6-1 8 0l-2 8c-3-1.500-5-1.500-8 0z" fill="#3fa3e0" />
            <path d="M18 20c3 1.500 6 1.500 9 0l-2 8c-3 1.500-6 1.500-9 0z" fill="#fcc62c" />
          </Svg>
        </Orb>
        <Grip />
        <TaskButton type="button" aria-label="Internet Explorer" $w={51} $kind="active" $stack><IeIcon s={34} /></TaskButton>
        <TaskButton type="button" aria-label="资源管理器" $w={54} $stack>
          <Svg s={34}>
            <path d="M3 5h9l2 2h14v4H3z" fill="#e3b85a" /><path d="M6 3h8v5H6z" fill="#fff" /><path d="M6 3h3v3H6z" fill="#3ba04a" /><path d="M14 5h8v5h-8z" fill="#fff" /><path d="M14 5h3v3h-3z" fill="#d0443a" /><path d="M22 6h8v4h-8z" fill="#fff" /><path d="M22 6h3v3h-3z" fill="#3a78d0" />
            <path d="M2 9h30v20H2z" fill="#fbe39a" stroke="#d9ab4c" />
            <path d="M7.500 31V21h20v10h-5v-5h-10v5z" fill="#a5d8f4" stroke="#4f9dcb" />
          </Svg>
        </TaskButton>
        <TaskButton type="button" aria-label="媒体播放器" $w={47} $kind="plain" $stack>
          <Svg s={28}><path d="M22 4l3 1v20l-3 1" fill="#8cc4e8" stroke="#d9eefb" /><path d="M2 3h20v22H2z" fill="#b6d9f0" stroke="#e2f2fc" /><circle cx="12" cy="14" r="9" fill="#f07a22" stroke="#fbd2a8" /><path d="M9 9l8 5-8 5z" fill="#fff" /></Svg>
        </TaskButton>
        <TaskButton type="button" aria-label="搜狗浏览器" $w={59}>
          <Svg s={32}><circle cx="16" cy="16" r="15" fill="#1a86cc" stroke="#eef6fb" strokeWidth="2" /><path d="M24 6C17 3 9 6 9 11.500c0 5 9 4.500 9 8.500 0 3-5 5.500-10 6 6 4 17 1.500 17-6.500 0-6-10-5.500-10-9C15 8 19 6 24 6z" fill="#fff" /></Svg>
        </TaskButton>
        <TaskButton type="button" aria-label="QQ" $w={52} $stack><Penguin s={32} /></TaskButton>
        <TaskButton type="button" aria-label="画图" $w={59}>
          <Svg s={34}><path d="M15 9c8 0 15 4 15 10 0 5-4 4-6 5s0 5-5 5C9 29 2 25 2 18s6-9 13-9z" fill="#eef3f8" stroke="#8ba6bc" /><circle cx="9" cy="15" r="2.500" fill="#4db34a" /><circle cx="17" cy="13" r="2.500" fill="#e8b030" /><circle cx="8" cy="21" r="2.500" fill="#d8463c" /><circle cx="15" cy="23" r="2.500" fill="#3f8fd0" /><path d="M18 31L28 9" stroke="#c97f3a" strokeWidth="2.600" /><path d="M26 10l2-8 5 2-4 7z" fill="#a98254" /></Svg>
        </TaskButton>
        <Tray>
          <Grip />
          <TrayButton type="button" aria-label="输入法" $w={20}><Svg w={16} h={14}><path d="M3 5c0-3 5-1 8-4" stroke="#c8c4bc" /><rect x=".5" y="5.500" width="15" height="7" rx="1" fill="#d8d4cc" stroke="#8a857c" /><path d="M2 7.500h12M2 9.500h12" stroke="#777" strokeDasharray="1 1" /></Svg></TrayButton>
          <TrayButton type="button" aria-label="帮助" $w={22}><Svg s={16}><circle cx="8" cy="8" r="7.300" fill="#141e9c" stroke="#c9d4f4" /><path d="M5.500 6.200c0-3.600 5.200-3 5 0-.1 1.600-2.500 1.700-2.500 3.600M8 11v1.800" stroke="#fff" strokeWidth="1.700" /></Svg></TrayButton>
          <TrayButton type="button" aria-label="还原语言栏" $w={22}><Svg w={10} h={18}><path d="M3.500 3V1h6v4H8M1 3.500h6v3H1z" stroke="#fff" /><path d="M2 13h6l-3 3.500z" fill="#fff" /></Svg></TrayButton>
          <TrayButton as="span" $w={24} />
          {trayIcons.map(([label, icon], i) => <TrayButton key={i} type="button" aria-label={label}>{icon}</TrayButton>)}
          <Clock>08:49<br />2012-09-24</Clock>
          <ShowDesktop type="button" aria-label="显示桌面" />
        </Tray>
      </Taskbar>
    </Window>
  );
}
